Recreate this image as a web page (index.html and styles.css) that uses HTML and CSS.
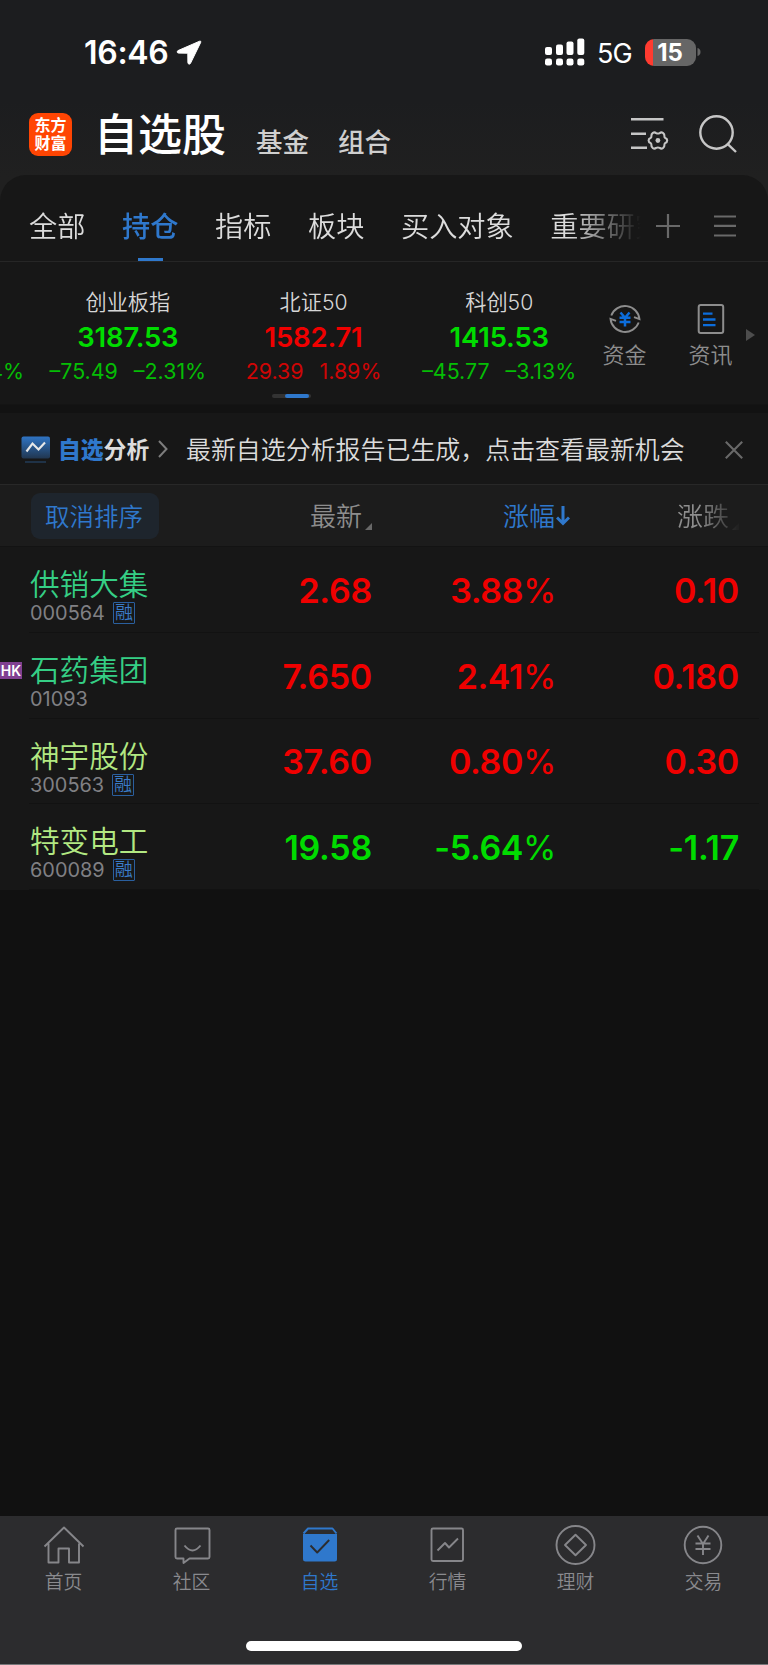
FILE: index.html
```html
<!DOCTYPE html>
<html lang="zh-CN">
<head>
<meta charset="utf-8">
<title>自选股</title>
<link rel="stylesheet" href="styles.css">
</head>
<body>
<div class="app">
  <header class="top">
    <div class="status">
      <span class="clock">16:46</span>
      <svg class="locate" width="26" height="26" viewBox="0 0 26 26"><path d="M23.600 1.200 2 10.600c-1.300.7-1 2.400.5 2.500l9.300.1.1 9.500c.1 1.600 1.900 2 2.600.6L24.700 2.400c.4-.9-.2-1.600-1.100-1.200Z" fill="#fff" stroke="#fff" stroke-width="1"/></svg>
      <svg class="signal" width="40" height="28" viewBox="0 0 40 28" fill="#fff"><rect x="0" y="9" width="7" height="8" rx="2"/><rect x="11" y="6.500" width="7" height="10.500" rx="2"/><rect x="21.500" y="3.500" width="7" height="13.500" rx="2"/><rect x="32.300" y="0.500" width="7" height="16.500" rx="2"/><rect x="0" y="20.500" width="7" height="7" rx="2.200"/><rect x="11" y="20.500" width="7" height="7" rx="2.200"/><rect x="21.500" y="20.500" width="7" height="7" rx="2.200"/><rect x="32.300" y="20.500" width="7" height="7" rx="2.200"/></svg>
      <span class="net">5G</span>
      <span class="battery">15</span><svg class="cap" width="4" height="8" viewBox="0 0 4 8"><path d="M.5 0C2.500.500 3.500 2 3.500 4S2.500 7.500.500 8Z" fill="#666"/></svg>
    </div>
    <div class="titlebar">
      <div class="logo"><span>东方</span><span>财富</span></div>
      <h1>自选股</h1>
      <span class="sub">基金</span>
      <span class="sub">组合</span>
      <svg class="manage" width="38" height="34" viewBox="0 0 38 34" fill="none" stroke="#c6c6c6" stroke-width="2.400"><path d="M0 2.200h32.500M0 16.700h15M0 30.700h16"/><path stroke-width="2.100" stroke-linejoin="round" d="M36.200 23.500Q36.200 25.300 34.200 26Q33.200 26.800 33.400 28.200Q33.600 30 31.900 31.200Q30.200 32.200 28.700 30.900Q26.900 30 25.100 30.900Q23.600 32.200 21.900 31.200Q20.200 30 20.400 28.200Q20.600 26.800 19.600 26Q17.600 25.300 17.600 23.500Q17.600 21.700 19.600 21Q20.600 20.200 20.400 18.800Q20.200 17 21.900 15.800Q23.600 14.800 25.100 16.100Q26.900 17 28.700 16.100Q30.200 14.800 31.900 15.800Q33.600 17 33.400 18.800Q33.200 20.200 34.200 21Q36.200 21.700 36.200 23.500Z"/><circle cx="26.900" cy="23.500" r="2.400" fill="#c6c6c6" stroke="none"/></svg>
      <svg class="search" width="38" height="38" viewBox="0 0 38 38" fill="none" stroke="#c6c6c6" stroke-width="2.400"><circle cx="17.500" cy="17.500" r="16.200"/><path d="M28.500 28.800 37 37"/></svg>
    </div>
  </header>

  <main class="panel">
    <nav class="tabs">
      <div class="tablist"><span>全部</span><span class="on">持仓</span><span>指标</span><span>板块</span><span>买入对象</span><span>重要研究</span></div>
      <svg class="plus" width="24" height="24" viewBox="0 0 24 24" stroke="#696969" stroke-width="2.200"><path d="M12 0v24M0 12h24"/></svg>
      <svg class="menu" width="22" height="22" viewBox="0 0 22 22" stroke="#696969" stroke-width="2.200"><path d="M0 1.500h22M0 10.800h22M0 20.500h22"/></svg>
    </nav>

    <section class="market">
      <div class="indices">
        <div class="index clipped down"><p class="chg"><span>4%</span></p></div>
        <div class="index down"><p class="name">创业板指</p><p class="val">3187.53</p><p class="chg"><span>–75.49</span><span>–2.31%</span></p></div>
        <div class="index up"><p class="name">北证50</p><p class="val">1582.71</p><p class="chg"><span>29.39</span><span>1.89%</span></p></div>
        <div class="index down"><p class="name">科创50</p><p class="val">1415.53</p><p class="chg"><span>–45.77</span><span>–3.13%</span></p></div>
      </div>
      <div class="quick">
        <svg width="34" height="34" viewBox="0 0 34 34" fill="none"><path d="M3.300 13.500A14.600 14.600 0 0 1 31.500 17.200L26 15.200M30.700 20.500A14.600 14.600 0 0 1 2.500 16.800L8 18.800" stroke="#8d8d8d" stroke-width="1.900"/><path d="m12.500 10.500 4.500 5.300 4.500-5.300M11.500 15.700h11M11.500 20h11M17 15.700v8.800" stroke="#0c6ddb" stroke-width="2.500"/></svg>
        <span>资金</span>
      </div>
      <div class="quick">
        <svg width="34" height="34" viewBox="0 0 34 34" fill="none"><rect x="4.700" y="3" width="24.500" height="28" rx="2" stroke="#8d8d8d" stroke-width="2"/><path d="M9 11.700h9.500M9 17.500h12.500M9 23.200h12.500" stroke="#0c6ddb" stroke-width="2.300"/></svg>
        <span>资讯</span>
      </div>
      <svg class="more" width="9" height="12" viewBox="0 0 9 12"><path d="M0 0 9 6 0 12Z" fill="#4d4d4d"/></svg>
      <div class="pager"><i></i></div>
    </section>

    <section class="analysis">
      <svg class="trend" width="30" height="28" viewBox="0 0 30 28" fill="none"><defs><linearGradient id="g" x1="0" y1="0" x2="0" y2="1"><stop stop-color="#2f74c4"/><stop offset="1" stop-color="#21364f"/></linearGradient></defs><rect x=".5" y=".5" width="28.500" height="22" rx="2" fill="url(#g)"/><path d="m5.500 15.500 6-8 6 6L24 6.500" stroke="#e8e8e8" stroke-width="2.100"/><path d="M4 26h21" stroke="#1f3247" stroke-width="2"/></svg>
      <strong><b>自选</b>分析</strong>
      <svg class="chev" width="10" height="18" viewBox="0 0 10 18" fill="none" stroke="#7d7d7d" stroke-width="2"><path d="m1 1 7.500 8L1 17"/></svg>
      <span class="msg">最新自选分析报告已生成，点击查看最新机会</span>
      <svg class="close" width="18" height="18" viewBox="0 0 18 18" stroke="#696969" stroke-width="2.100"><path d="m.8.8 16.400 16.400M17.200.8.8 17.200"/></svg>
    </section>

    <div class="row head">
      <button class="reset">取消排序</button>
      <span class="c1">最新<svg width="7" height="7" viewBox="0 0 7 7"><path d="M7 0v7H0Z" fill="#686868"/></svg></span>
      <span class="c2">涨幅<svg width="14" height="20" viewBox="0 0 14 20" fill="none" stroke="#2f78cc" stroke-width="3"><path d="M7 0v18M1 11.500l6 6 6-6"/></svg></span>
      <span class="c3">涨跌<svg width="7" height="7" viewBox="0 0 7 7"><path d="M7 0v7H0Z" fill="#686868"/></svg></span>
    </div>

    <div class="row stock up">
      <div class="id g1"><p>供销大集</p><div class="code">000564<em>融</em></div></div>
      <span class="c1">2.68</span><span class="c2">3.88<small>%</small></span><span class="c3">0.10</span>
    </div>
    <div class="row stock up">
      <span class="hk">HK</span>
      <div class="id g1"><p>石药集团</p><div class="code">01093</div></div>
      <span class="c1">7.650</span><span class="c2">2.41<small>%</small></span><span class="c3">0.180</span>
    </div>
    <div class="row stock up">
      <div class="id g2"><p>神宇股份</p><div class="code">300563<em>融</em></div></div>
      <span class="c1">37.60</span><span class="c2">0.80<small>%</small></span><span class="c3">0.30</span>
    </div>
    <div class="row stock down">
      <div class="id g2"><p>特变电工</p><div class="code">600089<em>融</em></div></div>
      <span class="c1">19.58</span><span class="c2">-5.64<small>%</small></span><span class="c3">-1.17</span>
    </div>
  </main>

  <footer class="dock">
    <div class="items">
      <a><svg width="42" height="42" viewBox="0 0 42 42"><path d="M1.500 21.500 21 2.500l19.500 19M5.500 18.500V37.500H15.500V23.500h10.500v14h10V18.500"/></svg><span>首页</span></a>
      <a><svg width="42" height="42" viewBox="0 0 42 42"><path d="M6 3.500h31a1.500 1.500 0 0 1 1.500 1.500v27a1.500 1.500 0 0 1-1.500 1.500H18.500L12.500 38v-4.500H6A1.500 1.500 0 0 1 4.500 32V5A1.500 1.500 0 0 1 6 3.500ZM13.500 20.500q8 10 16 0"/></svg><span>社区</span></a>
      <a class="on"><svg width="42" height="42" viewBox="0 0 42 42"><path d="M4.500 8.500 9 3.500h24.500l4 5" /><path d="M4 9h34v25a2.500 2.500 0 0 1-2.500 2.500h-29A2.500 2.500 0 0 1 4 34Z" class="solid"/><path class="tick" d="m11.500 20.500 6.700 7 12-12.500"/></svg><span>自选</span></a>
      <a><svg width="42" height="42" viewBox="0 0 42 42"><rect x="4.500" y="3.500" width="31.500" height="32.500" rx="1.500"/><path d="m10.500 25.500 7.500-7.500 4 4.500 9-9"/></svg><span>行情</span></a>
      <a><svg width="42" height="42" viewBox="0 0 42 42"><circle cx="20.500" cy="20" r="19"/><path d="M20.500 9.800 31 20 20.500 30.200 10 20Z"/></svg><span>理财</span></a>
      <a><svg width="42" height="42" viewBox="0 0 42 42"><circle cx="20" cy="20" r="18.300"/><path d="m14.500 10.500 5.500 8.500 5.500-8.500M12.500 18.500h15M12.500 24h15M20 18.500V30"/></svg><span>交易</span></a>
    </div>
    <div class="homebar"></div>
  </footer>
</div>
</body>
</html>
```

FILE: styles.css
```css
* { box-sizing: border-box; margin: 0; padding: 0; }
body { background: #111; font-family: Inter, "Noto Sans CJK SC", sans-serif; color: #dcdcdc; }
svg { display: block; flex: none; }
.app { width: 768px; height: 1665px; display: flex; flex-direction: column; overflow: hidden; background: #111; }

.top { height: 201px; flex: none; background: linear-gradient(#1c1d1f 50%, #202020 88%); }
.status { height: 104px; padding: 0 67px 0 84px; display: flex; align-items: center; color: #fff; }
.clock { font-size: 32px; font-weight: 600; letter-spacing: -.3px; width: 92px; white-space: nowrap; }
.locate { margin-top: 2px; }
.signal { margin-left: auto; margin-right: 12px; }
.net { font-size: 27px; width: 48px; letter-spacing: -1px; padding-top: 2px; }
.battery { width: 51px; height: 27px; border-radius: 9px; background: linear-gradient(90deg, #ff3b30 8px, #666 8px); font-size: 24px; font-weight: 700; line-height: 27px; padding-right: 1px; text-align: center; }
.cap { margin-left: 1px; }
.titlebar { height: 60px; padding: 0 31px 0 29px; display: flex; align-items: center; }
.logo { width: 43px; height: 43px; border-radius: 9px; background: #ff4503; color: #fff; font-size: 16px; font-weight: 700; line-height: 18px; display: flex; flex-direction: column; align-items: center; justify-content: center; margin-right: 22px; }
h1 { font-size: 44px; font-weight: 500; color: #fff; line-height: 60px; width: 162px; padding-top: 1px; }
.sub { font-size: 26.500px; font-weight: 500; color: #cfcfcf; line-height: 40px; width: 82px; padding-top: 15px; }
.manage { margin-left: auto; margin-right: 30px; }

.panel { margin-top: -26px; background: #171717; border-radius: 26px 26px 0 0; }
.tabs { height: 87px; border-bottom: 1px solid #262626; display: flex; align-items: center; padding: 0 32px 0 29px; }
.tablist { width: 612px; height: 86px; overflow: hidden; display: flex; gap: 36.600px; font-size: 28.200px; line-height: 104px; white-space: nowrap; -webkit-mask-image: linear-gradient(90deg, #000 540px, transparent 612px); mask-image: linear-gradient(90deg, #000 540px, transparent 612px); }
.tablist span { flex: none; font-weight: 350; height: 86px; }
.tablist .on { color: #2f78cc; font-weight: 500; background: linear-gradient(#2f78cc, #2f78cc) center bottom / 25px 3px no-repeat; }
.plus { margin: 15px 0 0 15px; }
.menu { margin: 15px 0 0 auto; }

.market { height: 143px; display: flex; position: relative; border-bottom: 1px solid #141414; }
.indices { width: 592px; display: flex; overflow: hidden; }
.index { width: 185.700px; flex: none; text-align: center; padding-top: 26px; }
.clipped { width: 35px; padding: 96px 11px 0 0; }
.clipped .chg { justify-content: flex-end; }
.name { font-size: 21.200px; line-height: 28px; }
.val { font-size: 27.500px; font-weight: 600; letter-spacing: -.2px; line-height: 42px; }
.chg { display: flex; justify-content: center; gap: 16px; font-size: 21.400px; line-height: 26px; }
.up { color: #f00000; }
.down { color: #00dc00; }
.index.up .chg { color: #cf0505; }
.index.down .chg { color: #05bd05; }
.index .name { color: #d6d6d6; font-weight: 350; }
.quick { width: 86px; padding: 40px 10px 0; margin-left: -10px; display: flex; flex-direction: column; align-items: center; font-size: 22px; font-weight: 350; line-height: 32px; color: #8d8d8d; gap: 3px; }
.quick span { margin-left: -1px; }
.quick + .quick { margin-left: 0; }
.more { margin: 67px 0 0 -8px; }
.pager { position: absolute; left: 272px; top: 132px; width: 39px; height: 4px; border-radius: 2px; background: #333; }
.pager i { display: block; width: 24px; height: 4px; margin-left: 13px; border-radius: 2px; background: #2f78cc; }

.analysis { height: 80px; border-top: 8px solid #121212; border-bottom: 1px solid #282828; display: flex; align-items: center; padding: 0 25px 0 21px; }
.trend { margin-right: 7px; margin-top: 2px; }
strong { font-size: 22.800px; line-height: 32px; width: 100px; padding-top: 2px; }
strong b { color: #2f78cc; }
.chev { margin-top: 1px; }
.msg { font-size: 24.950px; font-weight: 350; line-height: 36px; margin-left: 18px; padding-top: 3px; white-space: nowrap; }
.close { margin-left: auto; margin-top: 2px; }

.row { display: grid; grid-template-columns: 241px 131px 183px 184px; align-items: center; position: relative; }
.row span { text-align: right; }
.head { height: 62px; background: #1c1c1c; border-bottom: 1px solid #131313; font-size: 26px; font-weight: 350; line-height: 40px; color: #8d8d8d; padding-top: 1px; }
.reset { width: 128px; height: 46px; margin-left: 31px; border: 0; border-radius: 9px; background: #1e252d; color: #2f78cc; font: 350 24.500px/48px Inter, "Noto Sans CJK SC", sans-serif; padding-right: 2px; white-space: nowrap; }
.head span { display: flex; justify-content: flex-end; align-items: center; padding-top: 1px; }
.head .c1 svg, .head .c3 svg { margin: 19px 0 0 3px; }
.head .c2 { color: #2f78cc; margin-right: -15px; }
.head .c2 svg { margin-left: 1px; margin-top: -2px; }
.head .c3 { -webkit-mask-image: linear-gradient(90deg, #000 145px, transparent 186px); mask-image: linear-gradient(90deg, #000 145px, transparent 186px); }
.stock { height: 85.800px; font-size: 34px; font-weight: 600; letter-spacing: -.25px; background: linear-gradient(#121212, #121212) 29px bottom / 730px 1px no-repeat; }
.stock > span { padding-top: 1px; }
.stock .c2 { margin-right: -1px; letter-spacing: -.4px; }
.stock small { font-size: inherit; font-weight: 400; }
.id { padding-left: 30px; font-weight: 400; align-self: start; padding-top: 19px; letter-spacing: 0; }
.id p { font-size: 29.600px; font-weight: 350; line-height: 36px; white-space: nowrap; }
.g1 p { color: #35cf85; }
.g2 p { color: #b2e882; }
.code { display: flex; align-items: center; font-size: 19.900px; line-height: 22px; color: #808084; }
.code em { font-style: normal; font-weight: 350; width: 22px; height: 22px; margin-left: 8px; border: 1.500px solid #2a5f9e; border-radius: 1px; color: #3a7cc8; font-size: 18px; line-height: 19px; display: flex; justify-content: center; }
.row .hk { position: absolute; left: 0; top: 29px; width: 22px; height: 17px; padding: 0; background: #804091; color: #fff; font-size: 14px; font-weight: 600; line-height: 17px; text-align: center; letter-spacing: 0; }

.dock { margin-top: auto; height: 149px; background: #2c2c2e; border-bottom: 1px solid #77777a; flex: none; }
.items { display: grid; grid-template-columns: repeat(6, 128px); height: 125px; padding-top: 9px; }
.items a { display: flex; flex-direction: column; align-items: center; font-size: 18.800px; font-weight: 350; line-height: 26px; color: #8a8a8e; gap: 3px; }
.items a span { padding-right: 1px; }
.items svg { fill: none; stroke: #86868a; stroke-width: 1.900px; stroke-linejoin: round; }
.items .on { color: #2f78cc; }
.items .on svg { stroke: #2f78cc; }
.items .solid { fill: #2f78cc; stroke: none; }
.items .tick { stroke: #2c2c2e; }
.homebar { width: 276px; height: 10px; border-radius: 5px; background: #fff; margin: 0 auto; }
```
